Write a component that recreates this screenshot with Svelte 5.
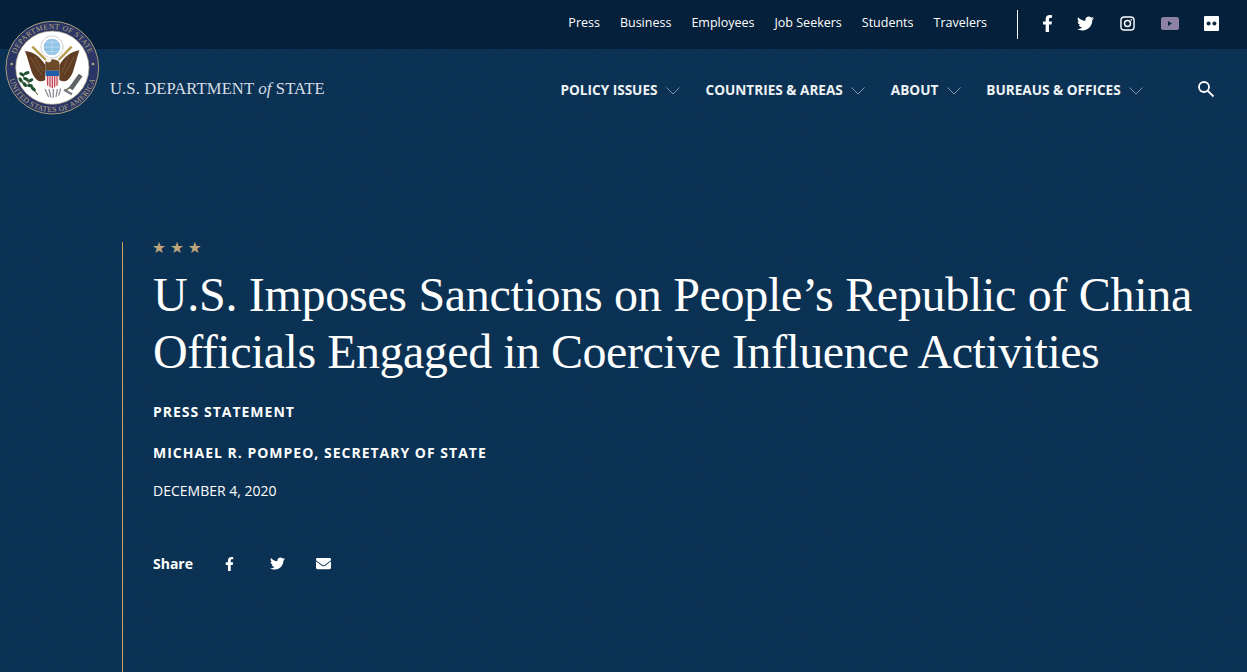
<script>
  const topLinks = ['Press', 'Business', 'Employees', 'Job Seekers', 'Students', 'Travelers'];
  const navItems = ['Policy Issues', 'Countries & Areas', 'About', 'Bureaus & Offices'];

  const twitter = 'M459.37 151.716c.325 4.548.325 9.097.325 13.645 0 138.72-105.583 298.558-298.558 298.558-59.452 0-114.68-17.219-161.137-47.106 8.447.974 16.568 1.299 25.34 1.299 49.055 0 94.213-16.568 130.274-44.832-46.132-.975-84.792-31.188-98.112-72.772 6.498.974 12.995 1.624 19.818 1.624 9.421 0 18.843-1.3 27.614-3.573-48.081-9.747-84.143-51.98-84.143-102.985v-1.299c13.969 7.797 30.214 12.67 47.431 13.319-28.264-18.843-46.781-51.005-46.781-87.391 0-19.492 5.197-37.36 14.294-52.954 51.655 63.675 129.3 105.258 216.365 109.807-1.624-7.797-2.599-15.918-2.599-24.04 0-57.828 46.782-104.934 104.934-104.934 30.213 0 57.502 12.67 76.67 33.137 23.715-4.548 46.456-13.32 66.599-25.34-7.798 24.366-24.366 44.833-46.132 57.827 21.117-2.273 41.584-8.122 60.426-16.243-14.292 20.791-32.161 39.308-52.628 54.253z';
  const facebook = 'M279.14 288l14.22-92.66h-88.91v-60.13c0-25.35 12.42-50.06 52.24-50.06h40.42V6.26S260.43 0 225.36 0c-73.22 0-121.08 44.38-121.08 124.72v70.62H22.89V288h81.39v224h100.17V288z';
  const envelope = 'M502.3 190.8c3.9-3.1 9.7-.2 9.7 4.7V400c0 26.5-21.5 48-48 48H48c-26.5 0-48-21.5-48-48V195.6c0-5 5.7-7.8 9.7-4.7 22.4 17.4 52.1 39.5 154.1 113.6 21.1 15.4 56.7 47.8 92.2 47.6 35.7.3 72-32.8 92.3-47.6 102-74.1 131.6-96.3 154-113.7zM256 320c23.2.4 56.6-29.2 73.4-41.4 132.7-96.3 142.8-104.7 173.4-128.7 5.8-4.5 9.2-11.5 9.2-18.9v-19c0-26.5-21.5-48-48-48H48C21.5 64 0 85.5 0 112v19c0 7.4 3.4 14.3 9.2 18.9 30.6 23.9 40.7 32.4 173.4 128.7 16.8 12.2 50.2 41.8 73.4 41.4z';

  // stacked sine lines for the wave texture; rows overshoot the tile so crests aren't clipped
  const waveRows = Array.from({ length: 26 }, (_, i) => i * 6 - 30);
  const olive = [[66, 178, 30], [80, 174, -20], [62, 195, 60], [78, 192, 20], [92, 196, -30], [74, 208, 50], [90, 212, 10], [100, 222, 40]];
</script>

<div class="page">
  <svg class="texture" aria-hidden="true" width="100%" height="100%">
    <defs>
      <pattern id="waves" width="110" height="90" patternUnits="userSpaceOnUse">
        {#each waveRows as y, i}
          <path class:strong={i % 3 === 0} d="M0 {y} C22 {y - 26} 33 {y - 26} 55 {y} S88 {y + 26} 110 {y}" />
        {/each}
      </pattern>
    </defs>
    <rect width="100%" height="100%" fill="url(#waves)" />
  </svg>

  <header>
    <div class="topbar">
      <ul class="top-links">
        {#each topLinks as link}
          <li>{link}</li>
        {/each}
      </ul>
      <div class="social">
        <svg class="i-fb" viewBox="0 0 320 512"><path d={facebook} /></svg>
        <svg class="i-tw" viewBox="0 0 512 512"><path d={twitter} /></svg>
        <svg class="i-ig" viewBox="0 0 16 16">
          <rect x="1" y="1" width="14" height="14" rx="3.6" fill="none" stroke="#fff" stroke-width="1.5" />
          <circle cx="8" cy="8" r="3.2" fill="none" stroke="#fff" stroke-width="1.5" />
          <circle cx="12" cy="4" r="0.9" />
        </svg>
        <svg class="i-yt" viewBox="0 0 18 13">
          <rect width="18" height="13" rx="2.6" fill="#8d82a3" />
          <path d="M7 4 L11 6.5 L7 9 Z" fill="#0b2540" />
        </svg>
        <svg class="i-fl" viewBox="0 0 15 15">
          <rect width="15" height="15" rx="1" fill="#fff" />
          <circle cx="4.6" cy="7.5" r="2" fill="#0b2540" />
          <circle cx="10.4" cy="7.5" r="2" fill="#0b2540" />
        </svg>
      </div>
    </div>

    <div class="mainbar">
      <div class="wordmark">U.S. DEPARTMENT <em>of</em> STATE</div>
      <nav>
        {#each navItems as item}
          <span class="nav-item">
            {item}
            <svg viewBox="0 0 14 8" width="14" height="8"><path d="M0.5 0.5 L7 7 L13.5 0.5" /></svg>
          </span>
        {/each}
      </nav>
      <svg class="search" viewBox="0 0 18 18" width="18" height="18">
        <circle cx="7" cy="7" r="5" />
        <path d="M10.8 10.8 L16.5 16.5" />
      </svg>
    </div>

    <svg class="seal" viewBox="0 0 315 315" width="105" height="105">
      <defs>
        <path id="arc-top" d="M 41 158 A 116 116 0 0 1 273 158" />
        <path id="arc-bottom" d="M 24 158 A 133 133 0 0 0 290 158" />
      </defs>
      <circle cx="157" cy="158" r="139" fill="#2b3566" stroke="#a8a07a" stroke-width="3" />
      <circle cx="157" cy="158" r="110" fill="#fff" stroke="#a8a07a" stroke-width="2" />
      <text class="seal-text"><textPath href="#arc-top" startOffset="50%" text-anchor="middle">DEPARTMENT OF STATE</textPath></text>
      <text class="seal-text"><textPath href="#arc-bottom" startOffset="50%" text-anchor="middle">UNITED STATES OF AMERICA</textPath></text>
      <circle cx="35" cy="147" r="4" fill="#b5ab7e" />
      <circle cx="279" cy="147" r="4" fill="#b5ab7e" />

      <circle cx="156" cy="96" r="33" fill="#fff" stroke="#9aa3ad" stroke-width="3" stroke-dasharray="2 2" />
      <circle cx="156" cy="96" r="25" fill="#8fc4e4" />
      <path d="M131 96 H181 M156 71 V121 M137 82 H175 M137 110 H175" stroke="#cbe3f2" stroke-width="2" fill="none" />

      <path d="M97 95 L138 135 M215 95 L176 135" stroke="#b59b4c" stroke-width="7" fill="none" />
      <path d="M75 108 C100 110 120 125 136 150 L136 195 C118 205 105 195 95 170 C88 150 82 125 75 108 Z" fill="#5f3c22" />
      <path d="M238 106 C212 110 194 125 178 150 L178 195 C196 205 209 195 219 170 C226 150 232 125 238 106 Z" fill="#5f3c22" />
      <path d="M90 125 L125 180 M103 125 L130 170 M205 125 L185 175 M222 125 L192 180" stroke="#8a6a48" stroke-width="2" fill="none" />
      <path d="M136 140 C146 130 168 130 178 140 L178 175 H136 Z" fill="#6e4a2b" />
      <circle cx="146" cy="134" r="8" fill="#f3f1ea" />

      <path d="M137 167 H177 V198 C177 210 165 216 157 220 C149 216 137 210 137 198 Z" fill="#efe3e4" />
      <path d="M143 182 V212 M150 182 V217 M157 182 V220 M164 182 V217 M171 182 V212" stroke="#c3374a" stroke-width="3.4" fill="none" />
      <path d="M137 167 H177 V183 H137 Z" fill="#1f5ea8" />

      <path d="M135 222 L146 246 M147 222 L153 248 M160 222 L160 248 M172 222 L168 246 M182 220 L176 242" stroke="#8d9096" stroke-width="4" fill="none" />
      <path d="M68 182 L114 240" stroke="#5a5a2c" stroke-width="3" fill="none" />
      {#each olive as [x, y, r]}
        <ellipse cx={x} cy={y} rx="9" ry="5" fill="#1f5130" transform="rotate({r} {x} {y})" />
      {/each}
      <path d="M194 228 L214 214" stroke="#5f5a3a" stroke-width="4" fill="none" />
      <path d="M212 222 L242 180" stroke="#5e6166" stroke-width="14" fill="none" />
      <path d="M192 224 L216 238" stroke="#75787d" stroke-width="7" fill="none" />
    </svg>
  </header>

  <main>
    <div class="intro">
      <div class="stars">★★★</div>
      <h1>U.S. Imposes Sanctions on People’s Republic of China <span>Officials Engaged in Coercive Influence Activities</span></h1>
      <p class="kicker">Press Statement</p>
      <p class="kicker author">Michael R. Pompeo, Secretary of State</p>
      <p class="date">December 4, 2020</p>
      <div class="share">
        <span>Share</span>
        <svg class="s-fb" viewBox="0 0 320 512"><path d={facebook} /></svg>
        <svg class="s-tw" viewBox="0 0 512 512"><path d={twitter} /></svg>
        <svg class="s-em" viewBox="0 0 512 512"><path d={envelope} /></svg>
      </div>
    </div>
  </main>
</div>

<style>
  :global(body) {
    margin: 0;
    background: #0b3154;
  }

  .page {
    position: relative;
    height: 672px;
    overflow: hidden;
    background: #0b3254;
    color: #fff;
    font-family: "Open Sans", sans-serif;
  }

  .texture {
    position: absolute;
    inset: 0;
  }

  .texture path {
    fill: none;
    stroke: rgba(4, 30, 56, 0.06);
    stroke-width: 1.2;
  }

  .texture path.strong {
    stroke: rgba(4, 30, 56, 0.16);
    stroke-width: 1.6;
  }

  header {
    position: relative;
  }

  .topbar {
    height: 49px;
    box-sizing: border-box;
    display: flex;
    justify-content: flex-end;
    align-items: center;
    padding-right: 28px;
    background: #05203a;
  }

  .top-links {
    display: flex;
    gap: 20px;
    margin: -4px 0 0;
    padding: 0;
    list-style: none;
    font-size: 12.5px;
    line-height: 18px;
  }

  .social {
    display: flex;
    align-items: center;
    height: 29px;
    margin-left: 30px;
    padding-left: 24px;
    border-left: 1px solid #fff;
  }

  .social svg {
    fill: #fff;
    display: block;
    margin-top: -3px;
  }

  .i-fb { width: 11px; height: 17px; margin-right: 24px; }
  .i-tw { width: 17px; height: 17px; margin-right: 26px; }
  .i-ig { width: 15px; height: 15px; margin-right: 26px; }
  .i-yt { width: 18px; height: 13px; margin-right: 25px; }
  .i-fl { width: 15px; height: 15px; }

  .mainbar {
    height: 82px;
    box-sizing: border-box;
    display: flex;
    align-items: center;
    padding: 0 32px 0 110px;
  }

  .wordmark {
    font-family: "Liberation Serif", serif;
    font-size: 16.6px;
    color: #d6dee6;
    letter-spacing: 0.1px;
    margin-top: -2px;
  }

  .wordmark em {
    font-size: 17px;
  }

  nav {
    display: flex;
    gap: 25.7px;
    margin: -1px 54px 0 auto;
    font-size: 13.6px;
    font-weight: 700;
    text-transform: uppercase;
    color: #eef2f5;
  }

  .nav-item {
    display: flex;
    align-items: center;
    gap: 8.3px;
  }

  .nav-item svg {
    margin-top: 2px;
    fill: none;
    stroke: #8195a8;
    stroke-width: 1;
  }

  .search {
    fill: none;
    stroke: #fff;
    stroke-width: 1.8;
    margin-top: -3px;
  }

  .seal {
    position: absolute;
    top: 15px;
    left: 0;
  }

  .seal-text {
    font-family: "Liberation Serif", serif;
    font-size: 23px;
    letter-spacing: 1.2px;
    fill: #b5ab7e;
  }

  main {
    position: relative;
    padding: 111px 0 0 122px;
  }

  .intro {
    height: 430px;
    padding-left: 30px;
    border-left: 1px solid #c9a562;
  }

  .stars {
    font-family: "DejaVu Sans", sans-serif;
    font-size: 15.5px;
    line-height: 12px;
    letter-spacing: 4px;
    color: #c0a47b;
    margin-left: -1px;
  }

  h1 {
    margin: 12px 0 0;
    width: 1060px;
    font-family: "Liberation Serif", serif;
    font-size: 48px;
    font-weight: 400;
    line-height: 57px;
    letter-spacing: -0.3px;
  }

  h1 span {
    letter-spacing: -0.49px;
  }

  .kicker {
    margin: 22px 0 0;
    font-size: 14px;
    font-weight: 700;
    line-height: 19px;
    letter-spacing: 1px;
    text-transform: uppercase;
  }

  .author {
    margin-top: 22px;
  }

  .date {
    margin: 19px 0 0;
    font-size: 14px;
    line-height: 19px;
    text-transform: uppercase;
  }

  .share {
    display: flex;
    align-items: center;
    margin-top: 54px;
    font-size: 14px;
    font-weight: 700;
    line-height: 19px;
  }

  .share svg {
    fill: #fff;
    display: block;
  }

  .s-fb { width: 9px; height: 14px; margin-left: 32px; }
  .s-tw { width: 15px; height: 15px; margin-left: 36px; }
  .s-em { width: 15px; height: 15px; margin-left: 31px; }
</style>
